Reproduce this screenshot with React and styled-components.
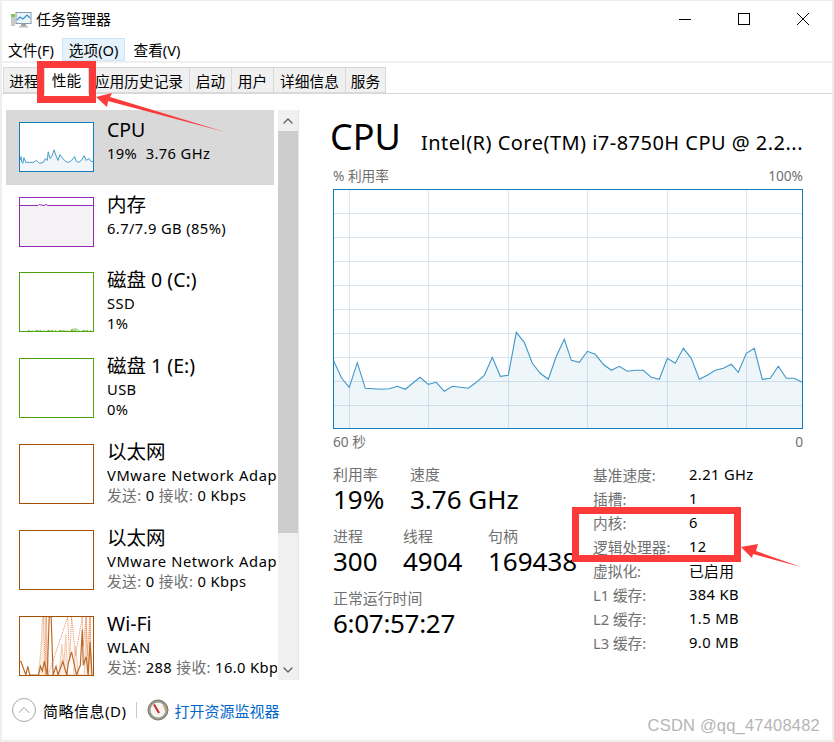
import React from "react";
import styled, { createGlobalStyle } from "styled-components";
import { ChevronUp, ChevronDown } from "lucide-react";

const FONT = `"Noto Sans", "Noto Sans CJK SC", sans-serif`;

const COLORS = {
  cpu: "#117dbb",
  cpuLine: "#3f97c9",
  cpuFill: "#f1f6fa",
  grid: "#d9e6f0",
  memory: "#9528b4",
  memoryFill: "#f4f2f5",
  disk: "#4da60c",
  net: "#a74f01",
  red: "#fd3a3a",
  label: "#707070",
  text: "#000",
};

// zoomed crop coords of the big chart, mapped back to px inside the chart box
const BIG_LINE = [
  [40, 180], [65, 235], [88, 262], [112, 188], [136, 265], [160, 266], [184, 268], [208, 266],
  [232, 259], [256, 268], [300, 232], [325, 253], [349, 247], [373, 274], [397, 259], [445, 265],
  [469, 247], [493, 226], [517, 172], [541, 229], [565, 226], [589, 97], [613, 127], [637, 190],
  [661, 220], [685, 238], [709, 169], [733, 118], [754, 181], [778, 187], [802, 154], [826, 163],
  [850, 193], [874, 211], [898, 199], [922, 214], [946, 211], [970, 211], [994, 232], [1018, 238],
  [1042, 175], [1066, 190], [1090, 145], [1114, 175], [1138, 238], [1162, 226], [1186, 211],
  [1210, 205], [1234, 193], [1255, 217], [1279, 160], [1303, 145], [1327, 238], [1351, 235],
  [1375, 199], [1399, 235], [1423, 235], [1447, 247],
].map(([x, y]) => [x / 3 - 14, y / 3 + 110]);

const toPoints = (list) => list.map(([x, y]) => `${x.toFixed(1)},${y.toFixed(1)}`).join(" ");

const BIG_V = [15, 94, 174, 253, 333, 412];
const BIG_H = [23, 47, 71, 95, 119, 143, 167, 191, 215];

const CPU_LINE =
  "0,39 1,35 2,41 3,42 4,36 6,41 10,41 14,41 17,39 20,42 24,41 26,37 28,39 29,30 31,37 33,34 35,28 37,34 39,39 41,33 44,37 47,40 50,41 53,39 56,35 58,40 60,41 63,39 66,34 68,39 71,37 73,40 75,40";

const WIFI_BACK = "19,60 22,28 23,0 26,0 28,60 40,60 43,28 45,50 47,18 49,60 55,60 57,30 60,60 66,60 68,0 70,60 72,0 73,60";
const WIFI_DOTS = "24,0 26,60 27,0 29,60 49,0 51,46 53,0 57,40 64,0 65,30 68,0 69,40 72,0 73,50";
const WIFI_LINE =
  "0,46 1,46 6,60 8,51 10,60 19,60 21,51 23,56 25,46 28,60 30,0 32,0 34,60 37,51 39,60 44,46 48,60 50,46 53,36 58,60 62,50 64,13 65,50 68,41 70,60 72,26 74,60";

const Sparkline = {
  cpu: () => (
    <Spark viewBox="0 0 75 50" preserveAspectRatio="none">
      <polygon points={`${CPU_LINE} 75,50 0,50`} fill={COLORS.cpuFill} />
      <polyline points={CPU_LINE} fill="none" stroke={COLORS.cpuLine} strokeWidth="1" />
    </Spark>
  ),
  memory: () => (
    <Spark viewBox="0 0 73 48">
      <rect x="0" y="8" width="73" height="40" fill={COLORS.memoryFill} />
      <polyline
        points="0,7.5 18,7.5 19,6.5 21,7 24,7.5 26,6.5 28,7.5 73,7.5"
        fill="none"
        stroke={COLORS.memory}
        strokeWidth="1"
      />
    </Spark>
  ),
  disk0: () => (
    <Spark viewBox="0 0 75 60" preserveAspectRatio="none">
      <polyline
        points="8,59.5 75,59.5"
        fill="none"
        stroke="#7cc04a"
        strokeWidth="1"
        strokeDasharray="2 2 1 3 3 1"
      />
      <polyline points="52,59 55,58 58,58 60,59" fill="none" stroke="#7cc04a" strokeWidth="1" />
    </Spark>
  ),
  wifi: () => (
    <Spark viewBox="0 0 75 60" preserveAspectRatio="none">
      <polygon points={`${WIFI_BACK} 73,60 19,60`} fill="#fbeee2" />
      <polyline points={WIFI_BACK} fill="none" stroke="#f3c8ab" strokeWidth="1" />
      <polyline points={WIFI_DOTS} fill="none" stroke="#e8824f" strokeWidth="1" strokeDasharray="1 1" />
      <polyline points={WIFI_LINE} fill="none" stroke="#b9682a" strokeWidth="1.2" />
    </Spark>
  ),
};

const DEVICES = [
  { id: "cpu", color: COLORS.cpu, graph: "cpu", title: "CPU", lines: ["19%\u00a0\u00a03.76 GHz"], active: true },
  { id: "mem", color: COLORS.memory, graph: "memory", title: "内存", lines: ["6.7/7.9 GB (85%)"] },
  { id: "d0", color: COLORS.disk, graph: "disk0", title: "磁盘 0 (C:)", lines: ["SSD", "1%"], tall: true },
  { id: "d1", color: COLORS.disk, title: "磁盘 1 (E:)", lines: ["USB", "0%"], tall: true },
  { id: "e0", color: COLORS.net, title: "以太网", lines: ["VMware Network Adapter VMnet1"], send: "0", recv: "0 Kbps", tall: true, wide: true },
  { id: "e1", color: COLORS.net, title: "以太网", lines: ["VMware Network Adapter VMnet8"], send: "0", recv: "0 Kbps", tall: true, wide: true },
  { id: "w", color: COLORS.net, graph: "wifi", title: "Wi-Fi", lines: ["WLAN"], send: "288", recv: "16.0 Kbps", tall: true },
];

const SPECS = [
  ["基准速度:", "2.21 GHz"],
  ["插槽:", "1"],
  ["内核:", "6"],
  ["逻辑处理器:", "12"],
  ["虚拟化:", "已启用"],
  ["L1 缓存:", "384 KB"],
  ["L2 缓存:", "1.5 MB"],
  ["L3 缓存:", "9.0 MB"],
];

const TABS = [
  { label: "进程", width: 42 },
  { label: "性能", width: 45, active: true },
  { label: "应用历史记录", width: 102 },
  { label: "启动", width: 43 },
  { label: "用户", width: 43 },
  { label: "详细信息", width: 73 },
  { label: "服务", width: 41 },
];

const AppIcon = () => (
  <svg width="22" height="18" viewBox="0 0 22 18">
    <rect x="1" y="3" width="4" height="12" fill="#c9c9c9" />
    <rect x="1" y="3" width="4" height="3" fill="#7ec850" />
    <rect x="6" y="1.5" width="15" height="11" fill="#eaf5fc" stroke="#8a9aa6" />
    <polyline points="7,9 10,6 13,8 17,4 20,7" fill="none" stroke="#3b8fd0" strokeWidth="1.2" />
    <rect x="11" y="13" width="5" height="2" fill="#9aa4aa" />
    <rect x="9" y="15" width="9" height="1.5" fill="#b9bfc4" />
  </svg>
);

const GaugeIcon = () => (
  <svg width="22" height="22" viewBox="0 0 22 22">
    <circle cx="11" cy="11" r="10" fill="#9a9a8e" stroke="#77776c" />
    <circle cx="11" cy="11" r="7.5" fill="#f6f4ee" />
    <path d="M16 6 A7 7 0 0 1 18 11" fill="none" stroke="#e2a36a" strokeWidth="1.4" />
    <line x1="7" y1="5.5" x2="12" y2="14" stroke="#c9252c" strokeWidth="2" />
  </svg>
);

const MinimizeIcon = () => (
  <svg width="14" height="14" viewBox="0 0 14 14">
    <line x1="1" y1="7.5" x2="13" y2="7.5" stroke="#000" />
  </svg>
);

const MaximizeIcon = () => (
  <svg width="14" height="14" viewBox="0 0 14 14">
    <rect x="1.5" y="1.5" width="11" height="11" fill="none" stroke="#000" />
  </svg>
);

const CloseIcon = () => (
  <svg width="14" height="14" viewBox="0 0 14 14">
    <path d="M1 1 L13 13 M13 1 L1 13" fill="none" stroke="#000" strokeWidth="1" />
  </svg>
);

const App = () => {
  return (
    <>
      <GlobalStyle />
      <Window>
        <TitleBar>
          <TitleIcon>
            <AppIcon />
          </TitleIcon>
          <TitleText>任务管理器</TitleText>
          <WindowButtons>
            <WindowButton><MinimizeIcon /></WindowButton>
            <WindowButton><MaximizeIcon /></WindowButton>
            <WindowButton><CloseIcon /></WindowButton>
          </WindowButtons>
        </TitleBar>

        <MenuBar>
          <MenuItem>文件(F)</MenuItem>
          <MenuItem $open>选项(O)</MenuItem>
          <MenuItem>查看(V)</MenuItem>
        </MenuBar>

        <TabStrip>
          {TABS.map((tab) => (
            <Tab key={tab.label} $active={tab.active} $width={tab.width}>
              {tab.label}
            </Tab>
          ))}
        </TabStrip>

        <Body>
          <Sidebar>
            <DeviceList>
              {DEVICES.map((device) => {
                const Graph = device.graph && Sparkline[device.graph];
                return (
                  <DeviceRow key={device.id} $active={device.active} $tall={device.tall}>
                    <GraphBox $color={device.color} $tall={device.tall}>
                      {Graph && <Graph />}
                    </GraphBox>
                    <DeviceText>
                      <DeviceTitle>{device.title}</DeviceTitle>
                      {device.lines.map((line) => (
                        <DeviceLine key={line} $wide={device.wide}>{line}</DeviceLine>
                      ))}
                      {device.send && (
                        <DeviceLine>
                          <Muted>发送:</Muted> {device.send} <Muted>接收:</Muted> {device.recv}
                        </DeviceLine>
                      )}
                    </DeviceText>
                  </DeviceRow>
                );
              })}
            </DeviceList>
            <ScrollBar>
              <ScrollButton><ChevronUp size={16} strokeWidth={2} /></ScrollButton>
              <ScrollTrack><ScrollThumb /></ScrollTrack>
              <ScrollButton><ChevronDown size={16} strokeWidth={2} /></ScrollButton>
            </ScrollBar>
          </Sidebar>

          <Detail>
            <Heading>
              <HeadingTitle>CPU</HeadingTitle>
              <HeadingSub>Intel(R) Core(TM) i7-8750H CPU @ 2.2...</HeadingSub>
            </Heading>
            <AxisRow $top>
              <span>% 利用率</span>
              <span>100%</span>
            </AxisRow>
            <BigChart>
              <svg width="468" height="238" viewBox="0 0 468 238">
                {BIG_V.map((x) => (
                  <line key={x} x1={x + 0.5} x2={x + 0.5} y1="0" y2="238" stroke={COLORS.grid} />
                ))}
                {BIG_H.map((y) => (
                  <line key={y} x1="0" x2="468" y1={y + 0.5} y2={y + 0.5} stroke={COLORS.grid} />
                ))}
                <polygon
                  points={`${toPoints(BIG_LINE)} 468,238 0,238`}
                  fill={COLORS.cpu}
                  fillOpacity="0.07"
                />
                <polyline points={toPoints(BIG_LINE)} fill="none" stroke={COLORS.cpuLine} strokeWidth="1.1" />
              </svg>
            </BigChart>
            <AxisRow>
              <span>60 秒</span>
              <span>0</span>
            </AxisRow>

            <Stats>
              <StatsLeft>
                <StatRow>
                  <Stat $width={77}><StatLabel>利用率</StatLabel><StatValue>19%</StatValue></Stat>
                  <Stat><StatLabel>速度</StatLabel><StatValue>3.76 GHz</StatValue></Stat>
                </StatRow>
                <StatRow>
                  <Stat $width={70}><StatLabel>进程</StatLabel><StatValue>300</StatValue></Stat>
                  <Stat $width={85}><StatLabel>线程</StatLabel><StatValue>4904</StatValue></Stat>
                  <Stat><StatLabel>句柄</StatLabel><StatValue>169438</StatValue></Stat>
                </StatRow>
                <StatRow>
                  <Stat><StatLabel>正常运行时间</StatLabel><StatValue $tight>6:07:57:27</StatValue></Stat>
                </StatRow>
              </StatsLeft>
              <SpecGrid>
                {SPECS.map(([label, value]) => (
                  <React.Fragment key={label}>
                    <SpecLabel>{label}</SpecLabel>
                    <SpecValue>{value}</SpecValue>
                  </React.Fragment>
                ))}
              </SpecGrid>
            </Stats>
          </Detail>
        </Body>

        <Footer>
          <CollapseButton><ChevronUp size={20} strokeWidth={1.2} color="#a0a0a0" /></CollapseButton>
          <FooterText>简略信息(D)</FooterText>
          <FooterDivider />
          <GaugeIcon />
          <MonitorLink>打开资源监视器</MonitorLink>
        </Footer>

        <Annotations width="834" height="742" viewBox="0 0 834 742">
          <rect x="40.5" y="64.5" width="52" height="35" fill="none" stroke={COLORS.red} strokeWidth="7" />
          <polygon points="96,97 112,93 110,97 225,132 108,101 107,107" fill={COLORS.red} />
          <rect x="575.5" y="510.5" width="162" height="48" fill="none" stroke={COLORS.red} strokeWidth="7" />
          <polygon points="741,547 758,544 756,551 801,567 753,554 752,558" fill={COLORS.red} />
        </Annotations>
        <Watermark>CSDN @qq_47408482</Watermark>
      </Window>
    </>
  );
};

const GlobalStyle = createGlobalStyle`
  html, body {
    margin: 0;
    padding: 0;
    background: #fff;
  }
  * {
    box-sizing: border-box;
  }
`;

const Window = styled.div`
  position: relative;
  width: 834px;
  height: 742px;
  overflow: hidden;
  background: #fff;
  border: 2px solid #eeeeee;
  border-width: 1px 2px 2px 2px;
  font-family: ${FONT};
  font-size: 14.7px;
  color: ${COLORS.text};
`;

const TitleBar = styled.div`
  display: flex;
  align-items: center;
  height: 37px;
  padding-left: 8px;
`;

const TitleIcon = styled.div`
  display: flex;
  width: 26px;
`;

const TitleText = styled.div`
  font-size: 15px;
  line-height: 20px;
  margin-top: -1px;
`;

const WindowButtons = styled.div`
  display: flex;
  margin-left: auto;
  margin-top: -1px;
`;

const WindowButton = styled.div`
  display: flex;
  align-items: center;
  justify-content: center;
  width: 59px;
  height: 36px;
`;

const MenuBar = styled.div`
  display: flex;
  height: 25px;
  padding-bottom: 1px;
  margin-left: -2px;
  padding-left: 1px;
  border-bottom: 2px solid #f0f0f0;
`;

const MenuItem = styled.div`
  display: flex;
  align-items: center;
  padding: 0 6px;
  height: 23px;
  margin-right: 1px;
  background: ${(p) => (p.$open ? "#e5f1fb" : "transparent")};
  border: 1px solid ${(p) => (p.$open ? "#cce4f7" : "transparent")};
  white-space: nowrap;
`;

const TabStrip = styled.div`
  display: flex;
  align-items: flex-end;
  height: 31px;
  padding-left: 2px;
  border-bottom: 1px solid #d9d9d9;
`;

const Tab = styled.div`
  display: flex;
  align-items: center;
  justify-content: center;
  width: ${(p) => p.$width}px;
  height: ${(p) => (p.$active ? "28px" : "26px")};
  margin-bottom: ${(p) => (p.$active ? "-1px" : "0")};
  padding-bottom: ${(p) => (p.$active ? "3px" : "0")};
  background: ${(p) => (p.$active ? "#fff" : "#f0f0f0")};
  border: 1px solid #d9d9d9;
  border-bottom: ${(p) => (p.$active ? "none" : "1px solid #d9d9d9")};
  margin-left: -1px;
  white-space: nowrap;
  overflow: hidden;
`;

const Body = styled.div`
  display: flex;
  height: 586px;
  padding-top: 16px;
`;

const Sidebar = styled.div`
  display: flex;
  width: 297px;
  height: 570px;
  padding-left: 4px;
  border-right: 1px solid #e4e4e4;
`;

const DeviceList = styled.div`
  width: 272px;
  height: 570px;
  overflow: hidden;
`;

const DeviceRow = styled.div`
  display: flex;
  width: 268px;
  height: ${(p) => (p.$tall ? "86px" : "75px")};
  padding: 12px 0 0 13px;
  background: ${(p) => (p.$active ? "#d9d9d9" : "transparent")};
`;

const GraphBox = styled.div`
  flex: none;
  width: 75px;
  height: ${(p) => (p.$tall ? "60px" : "50px")};
  border: 1px solid ${(p) => p.$color};
  background: #fff;
  overflow: hidden;
`;

const Spark = styled.svg`
  display: block;
  width: 73px;
  height: 100%;
`;

const DeviceText = styled.div`
  margin-left: 13px;
  min-width: 0;
  white-space: nowrap;
`;

const DeviceTitle = styled.div`
  font-size: 19.5px;
  line-height: 24px;
  margin-top: -4px;
  margin-bottom: 1px;
`;

const DeviceLine = styled.div`
  font-size: 14.7px;
  line-height: 20px;
  letter-spacing: ${(p) => (p.$wide ? "0.62px" : "0.4px")};
  width: 170px;
  overflow: hidden;
`;

const Muted = styled.span`
  color: ${COLORS.label};
`;

const ScrollBar = styled.div`
  display: flex;
  flex-direction: column;
  width: 20px;
  height: 570px;
  margin-left: 1px;
  background: #f0f0f0;
`;

const ScrollButton = styled.div`
  display: flex;
  align-items: center;
  justify-content: center;
  height: 21px;
  color: #606060;
`;

const ScrollTrack = styled.div`
  flex: 1;
`;

const ScrollThumb = styled.div`
  height: 402px;
  background: #cdcdcd;
`;

const Detail = styled.div`
  display: flex;
  flex-direction: column;
  width: 470px;
  margin-left: 34px;
  padding-top: 3px;
`;

const Heading = styled.div`
  display: flex;
  align-items: baseline;
  height: 48px;
  margin-left: -3px;
`;

const HeadingTitle = styled.div`
  font-size: 36px;
  line-height: 48px;
  width: 91px;
`;

const HeadingSub = styled.div`
  font-size: 20px;
  letter-spacing: 0.47px;
  white-space: nowrap;
`;

const AxisRow = styled.div`
  display: flex;
  justify-content: space-between;
  height: ${(p) => (p.$top ? "28px" : "22px")};
  line-height: ${(p) => (p.$top ? "30px" : "26px")};
  font-size: 13.7px;
  color: ${COLORS.label};
`;

const BigChart = styled.div`
  width: 470px;
  height: 240px;
  border: 1px solid ${COLORS.cpu};
  background: #fff;
  svg {
    display: block;
  }
`;

const Stats = styled.div`
  display: flex;
  margin-top: 13px;
`;

const StatsLeft = styled.div`
  display: flex;
  flex-direction: column;
  gap: 12px;
  width: 260px;
`;

const StatRow = styled.div`
  display: flex;
`;

const Stat = styled.div`
  display: flex;
  flex-direction: column;
  width: ${(p) => (p.$width ? `${p.$width}px` : "auto")};
  white-space: nowrap;
`;

const StatLabel = styled.div`
  font-size: 14.9px;
  line-height: 20px;
  color: ${COLORS.label};
`;

const StatValue = styled.div`
  font-size: 26px;
  line-height: 30px;
  letter-spacing: ${(p) => (p.$tight ? "-0.3px" : "0")};
`;

const SpecGrid = styled.div`
  display: grid;
  grid-template-columns: 96px auto;
  grid-auto-rows: 24px;
  align-items: center;
  height: 192px;
  margin-top: -2px;
`;

const SpecLabel = styled.div`
  color: ${COLORS.label};
  white-space: nowrap;
`;

const SpecValue = styled.div`
  letter-spacing: 0.4px;
  white-space: nowrap;
`;

const Footer = styled.div`
  display: flex;
  align-items: center;
  height: 60px;
  padding-left: 10px;
`;

const CollapseButton = styled.div`
  display: flex;
  align-items: center;
  justify-content: center;
  width: 24px;
  height: 24px;
  border: 1px solid #a8a8a8;
  border-radius: 50%;
`;

const FooterText = styled.div`
  margin-left: 7px;
  font-size: 15px;
  letter-spacing: 0.5px;
`;

const FooterDivider = styled.div`
  width: 1px;
  height: 16px;
  margin: 0 10px;
  background: #c8c8c8;
`;

const MonitorLink = styled.div`
  margin-left: 5px;
  font-size: 15px;
  color: #0066cc;
`;

const Annotations = styled.svg`
  position: absolute;
  top: -1px;
  left: -2px;
  pointer-events: none;
`;

const Watermark = styled.div`
  position: absolute;
  right: 12px;
  bottom: 5px;
  font-family: "Liberation Sans", sans-serif;
  font-size: 16.5px;
  letter-spacing: 0.2px;
  color: #b5b5b5;
`;

export default App;
